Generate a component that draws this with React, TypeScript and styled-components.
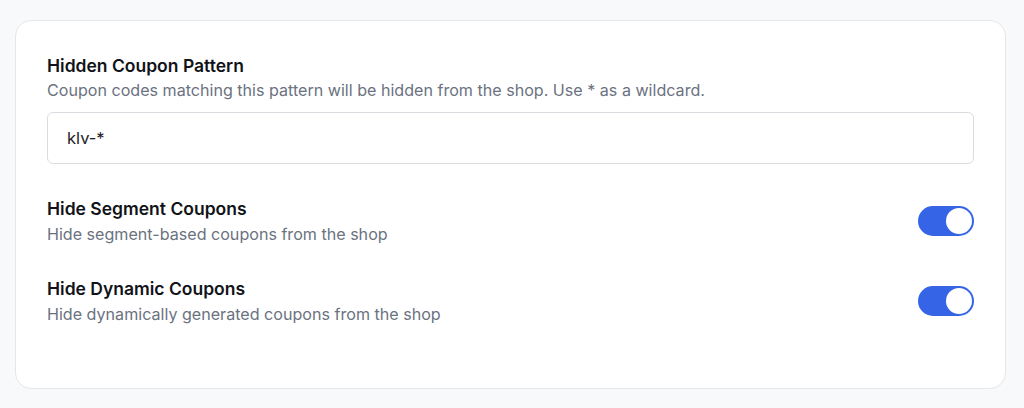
import React, { useState } from "react"
import styled, { createGlobalStyle } from "styled-components"

const GlobalStyle = createGlobalStyle`
  html, body {
    margin: 0;
    padding: 0;
    background: #f8f9fb;
    font-family: "Inter", "Liberation Sans", sans-serif;
    -webkit-font-smoothing: antialiased;
  }
`

const Page = styled.div`
  padding: 20px 18px 20px 15px;
`

const Card = styled.section`
  background: #ffffff;
  border: 1px solid #e4e6ea;
  border-radius: 16px;
  padding: 33px 31px 64px 31px;
  display: flex;
  flex-direction: column;
`

const Title = styled.h3`
  margin: 0;
  font-size: 17.5px;
  line-height: 24px;
  font-weight: 600;
  color: #111318;
`

const Hint = styled.p<{ $gap?: number }>`
  margin: ${(p) => p.$gap ?? 2}px 0 0;
  font-size: 16.1px;
  line-height: 20px;
  color: #6b7280;
`

const PatternInput = styled.input`
  margin-top: 12px;
  height: 52px;
  box-sizing: border-box;
  border: 1px solid #d9dce1;
  border-radius: 6px;
  padding: 0 19px;
  font-family: inherit;
  font-size: 16.5px;
  color: #1f2329;
  outline: none;
`

const SettingRow = styled.div`
  display: flex;
  align-items: center;
  justify-content: space-between;
  margin-top: 33px;
`

const SwitchTrack = styled.button<{ $on: boolean }>`
  width: 56px;
  height: 30px;
  border: none;
  border-radius: 15px;
  padding: 2px;
  cursor: pointer;
  display: flex;
  justify-content: ${(p) => (p.$on ? "flex-end" : "flex-start")};
  background: ${(p) => (p.$on ? "#3564e6" : "#d1d5db")};
`

const SwitchKnob = styled.span`
  width: 26px;
  height: 26px;
  border-radius: 50%;
  background: #ffffff;
`

const Toggle: React.FC<{ title: string; hint: string }> = ({ title, hint }) => {
  const [on, setOn] = useState(true)
  return (
    <SettingRow>
      <div>
        <Title>{title}</Title>
        <Hint $gap={3}>{hint}</Hint>
      </div>
      <SwitchTrack $on={on} onClick={() => setOn(!on)} aria-pressed={on}>
        <SwitchKnob />
      </SwitchTrack>
    </SettingRow>
  )
}

export default function App() {
  return (
    <>
      <GlobalStyle />
      <Page>
        <Card>
          <Title>{"Hidden Coupon Pattern"}</Title>
          <Hint>{"Coupon codes matching this pattern will be hidden from the shop. Use * as a wildcard."}</Hint>
          <PatternInput defaultValue={"klv-*"} />
          <Toggle title={"Hide Segment Coupons"} hint={"Hide segment-based coupons from the shop"} />
          <Toggle title={"Hide Dynamic Coupons"} hint={"Hide dynamically generated coupons from the shop"} />
        </Card>
      </Page>
    </>
  )
}
